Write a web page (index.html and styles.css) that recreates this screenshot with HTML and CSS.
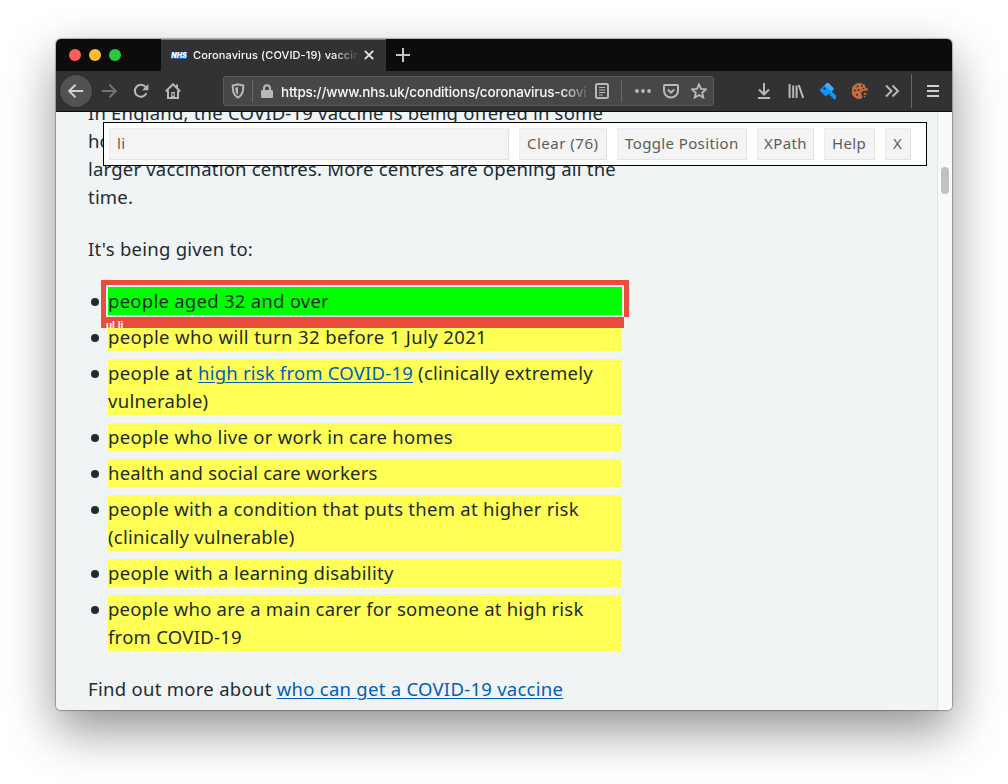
FILE: index.html
```html
<!DOCTYPE html>
<html lang="en">
<head>
<meta charset="utf-8">
<title>Coronavirus (COVID-19) vaccine</title>
<link rel="stylesheet" href="styles.css">
</head>
<body>
<div class="window">
  <header class="tabs">
    <div class="lights"><i class="red"></i><i class="amber"></i><i class="green"></i></div>
    <div class="tab">
      <span class="favicon">NHS</span>
      <span class="tab-title">Coronavirus (COVID-19) vaccin</span>
      <svg class="close" viewBox="0 0 10 10"><path d="M.8.8l8.400 8.400M9.200.8L.8 9.200"/></svg>
    </div>
    <svg class="plus" viewBox="0 0 14 14"><path d="M7 0v14M0 7h14"/></svg>
  </header>
  <nav class="toolbar">
    <span class="back"><svg viewBox="0 0 16 16"><path d="M15.200 8H1.500M7.500 1.700L1.200 8l6.300 6.300"/></svg></span>
    <svg class="ico forward" viewBox="0 0 16 16"><path d="M.8 8h13.700M8.500 1.700L14.800 8l-6.300 6.300"/></svg>
    <svg class="ico reload" viewBox="0 0 16 16"><path d="M13.400 10.200A6 6 0 1 1 12.600 4"/><path class="fill" d="M15.400 1v6.200H9.200z"/></svg>
    <svg class="ico home" viewBox="0 0 16 16"><path d="M.8 8.400L8 1.200l7.200 7.200M3 7.500V15h10V7.500"/><path class="fill" d="M6.200 9h3.600v6H6.200z"/><path class="fill" d="M11 1.500h2v4l-2-2z"/><path class="dark" d="M8 10.500v2"/></svg>
    <div class="urlbar">
      <svg class="ico shield" viewBox="0 0 14 16"><path d="M7 1.300c2 .8 3.600 1 5.300 1.100 0 5.600-.6 9.600-5.300 12.200C2.300 12 1.700 8 1.700 2.400 3.400 2.300 5 2.100 7 1.300z"/><path class="fill" d="M7 4v8C4.900 10.200 4.300 8.200 4.200 4.700z"/></svg>
      <i class="sep s1"></i>
      <svg class="lock" viewBox="0 0 12 14"><path d="M3 7V4.300a3 3 0 0 1 6 0V7"/><rect x="0" y="6" width="12" height="8" rx="1.200"/></svg>
      <span class="url">https://www.nhs.uk/conditions/coronavirus-covi</span>
      <svg class="reader" viewBox="0 0 14 16"><rect x="1" y="1" width="12" height="14" rx="1.500"/><path d="M4 4.500h6M4 7h6M4 9.500h6M4 12h3.500"/></svg>
      <i class="sep s2"></i>
      <svg class="dots" viewBox="0 0 16 4"><circle cx="2" cy="2" r="1.900"/><circle cx="8" cy="2" r="1.900"/><circle cx="14" cy="2" r="1.900"/></svg>
      <svg class="ico pocket" viewBox="0 0 16 16"><path d="M2 2h12a1 1 0 0 1 1 1v4.500a7 7 0 0 1-14 0V3a1 1 0 0 1 1-1z"/><path d="M4.800 6.500L8 9.600l3.200-3.100"/></svg>
      <svg class="ico star" viewBox="0 0 16 16"><path d="M8 1.300l2 4.600 5 .5-3.800 3.300 1.100 4.900L8 12l-4.300 2.600 1.100-4.900L1 6.400l5-.5z"/></svg>
    </div>
    <div class="actions">
      <svg class="ico" viewBox="0 0 16 16"><path d="M8 0v11M3 6.500l5 5 5-5M2 15h12"/></svg>
      <svg class="ico" viewBox="0 0 16 16"><path d="M1.600 1v14M5.200 2.500V15M8.600 2.500V15M10.800 2l4.400 13"/></svg>
      <svg class="ico color" viewBox="0 0 16 16"><path fill="#0a98fa" d="M0 6.800L6.800 0h1.700l4.900 4.900v1.700l-1.700 1.800 4.300 4.300V16h-3v-1.500h-1.600V13H9.800v-1.700L8.700 10.500l-2.200 2.200H5L0 8z"/><path fill="#42acf6" d="M4.500 2.300L6.800 0h1.700l4.900 4.900v1.700l-1.700 1.800z"/><path fill="#323234" d="M3 5.800L4.700 4.200l1.500 1.400-1.700 1.700z"/></svg>
      <svg class="ico color" viewBox="0 0 16 16"><path fill="#c06d3f" d="M9 .2a8 8 0 1 0 .5 15.600L10.500 13l-1.500-2 .8-2.500 2.700-.7L16 7.500 15.500 5l-2-.3L13 2z"/><g fill="#4a2418"><circle cx="5.500" cy="3.500" r=".9"/><circle cx="10" cy="3" r=".9"/><circle cx="2.800" cy="7.500" r=".9"/><circle cx="6.500" cy="7" r="1"/><circle cx="5" cy="11.800" r="1"/><circle cx="11.500" cy="5.500" r=".8"/></g><g fill="#c47b4c"><circle cx="12.500" cy="10.800" r="1"/><circle cx="14.300" cy="11.300" r=".8"/><circle cx="12.500" cy="13.600" r=".8"/></g></svg>
      <svg class="ico" viewBox="0 0 16 16"><path d="M2 2.500L7.500 8 2 13.500M8.500 2.500L14 8l-5.500 5.500"/></svg>
    </div>
    <i class="sep s3"></i>
    <svg class="burger" viewBox="0 0 12 12"><path d="M0 1h12M0 6h12M0 11h12"/></svg>
  </nav>
  <main class="page">
    <article>
      <p><span class="ln a1">In England, the COVID-19 vaccine is being offered in some</span><br><span class="ln">ho</span><br><span class="ln a1">larger vaccination centres. More centres are opening all the</span><br><span class="ln a1">time.</span></p>
      <p><span class="ln b1">It's being given to:</span></p>
      <ul>
        <li class="picked"><span class="ln b1">people aged 32 and over</span><span class="outline"></span><span class="path">ul li</span></li>
        <li><span class="ln b2">people who will turn 32 before 1 July 2021</span></li>
        <li><span class="ln b2">people at </span><a class="ln a1">high risk from COVID-19</a><span class="ln b1"> (clinically extremely</span><br><span class="ln b3">vulnerable)</span></li>
        <li><span class="ln b3">people who live or work in care homes</span></li>
        <li><span class="ln a1">health and social care workers</span></li>
        <li><span class="ln b1">people with a condition that puts them at higher risk</span><br><span class="ln b1">(clinically vulnerable)</span></li>
        <li><span class="ln b3">people with a learning disability</span></li>
        <li><span class="ln a1">people who are a main carer for someone at high risk</span><br><span class="ln b1">from COVID-19</span></li>
      </ul>
      <p><span class="ln b3">Find out more about </span><a class="ln b1">who can get a COVID-19 vaccine</a></p>
    </article>
    <div class="scrollbar"><i></i></div>
    <form class="selector">
      <span class="field">li</span>
      <span class="btn w1">Clear (76)</span>
      <span class="btn w2">Toggle Position</span>
      <span class="btn w3">XPath</span>
      <span class="btn w4">Help</span>
      <span class="btn w5">X</span>
    </form>
  </main>
</div>
</body>
</html>
```
FILE: styles.css
```css
* { box-sizing: border-box; }
body { margin: 0; width: 1008px; height: 784px; overflow: hidden; background: #fff; font-family: Inter, sans-serif; }
svg { display: block; flex: none; fill: none; stroke: #b9b9bb; stroke-width: 2; }
i { display: block; flex: none; }

.window { width: 896px; height: 671px; margin: 39px 0 0 56px; border-radius: 5px; box-shadow: 0 0 1px 1px rgba(0,0,0,.28), 0 20px 50px rgba(0,0,0,.44); }

.tabs { display: flex; height: 32px; background: #0c0c0d; border-radius: 5px 5px 0 0; align-items: center; }
.lights { display: flex; gap: 8px; width: 105px; padding-left: 13px; }
.lights i { width: 12px; height: 12px; border-radius: 50%; }
.red { background: #ff5f57; }
.amber { background: #febc2e; }
.green { background: #28c840; }
.tab { display: flex; align-items: center; width: 225px; height: 32px; padding-left: 10px; background: #323234; box-shadow: inset 0 1px #2f8bf0; }
.favicon { width: 16px; height: 7px; background: #1763b8; color: #fff; font: italic 900 7px/7px Inter, sans-serif; text-align: center; }
.tab-title { width: 168px; margin-left: 6px; overflow: hidden; white-space: nowrap; color: #f9f9fa; font-size: 11px; line-height: 14px; font-weight: 500; letter-spacing: .1px; mask-image: linear-gradient(90deg, #000 84%, transparent 99%); }
.close { width: 10px; height: 10px; margin-left: 3px; stroke: #e8e8e8; stroke-width: 1.8; }
.plus { width: 14px; height: 14px; margin: -1px 0 0 10px; stroke: #c4c4c4; }

.toolbar { display: flex; align-items: center; height: 41px; padding-left: 4px; background: #323234; border-bottom: 1px solid #0c0c0d; }
.back { display: grid; place-items: center; width: 32px; height: 32px; border-radius: 50%; background: #525254; box-shadow: 0 0 0 1px #2a2a2b; }
.back svg { width: 16px; height: 16px; stroke: #d0d0d1; }
.ico { width: 16px; height: 16px; }
.forward { margin-left: 9px; stroke: #737375; }
.reload { margin-left: 16px; }
.home { margin-left: 16px; }
.fill { fill: #b9b9bb; stroke: none; }
.dark { stroke: #323234; stroke-width: 1.5; }
.urlbar { display: flex; align-items: center; width: 491px; height: 30px; margin-left: 42px; padding-left: 7px; background: #474749; border: 1px solid #5c5c5e; border-radius: 3px; }
.shield { width: 14px; }
.sep { width: 1px; background: #68686b; }
.s1 { height: 22px; margin-left: 7px; }
.s2 { height: 22px; margin-left: 12px; }
.s3 { height: 34px; margin-left: 11px; }
.lock { width: 12px; height: 14px; margin-left: 8px; }
.lock rect { fill: #b9b9bb; stroke: none; }
.url { width: 307px; margin-left: 8px; padding-top: 2px; overflow: hidden; white-space: nowrap; color: #f9f9fa; font-size: 13.5px; font-weight: 500; letter-spacing: -.17px; mask-image: linear-gradient(90deg, #000 91%, transparent 101%); }
.reader { width: 14px; height: 16px; margin-left: 7px; }
.reader path { stroke-width: 1.2; }
.dots { width: 16px; height: 4px; margin-left: 13px; fill: #b9b9bb; stroke: none; }
.pocket { margin-left: 12px; }
.star { margin-left: 12px; stroke-width: 1.8; }
.actions { display: flex; gap: 16px; margin-left: 42px; }
.color { stroke: none; }
.burger { width: 12px; height: 12px; margin-left: 15px; stroke: #d0d0d1; }

.page { position: relative; height: 598px; overflow: hidden; background: #f0f4f5; border-radius: 0 0 5px 5px; }
article { width: 534px; margin: -13px 0 0 32px; color: #212b32; font: 18.5px/28px "Noto Sans", sans-serif; white-space: nowrap; }
p { margin: 0 0 24px; }
ul { list-style: none; margin: 0 0 24px 20px; padding: 0; }
li { position: relative; margin-bottom: 8px; background: #ffff55; }
li::before { content: ""; position: absolute; left: -17px; top: 11px; width: 8px; height: 8px; border-radius: 50%; background: #212b32; }
a { color: #005eb8; text-decoration: underline; text-decoration-thickness: 1px; text-underline-offset: 2px; }
.ln { white-space: pre; }
.a1 { letter-spacing: .2px; }
.b1 { letter-spacing: .26px; }
.b2 { letter-spacing: .38px; }
.b3 { letter-spacing: .29px; }
.picked { background: #0f0; }
.outline { position: absolute; left: -7px; top: -7px; width: 528px; height: 37px; border: 5px solid #e94e3d; border-bottom: 0; }
.path { position: absolute; z-index: 1; left: -7px; top: 30px; width: 523px; height: 11px; padding: 3px 0 0 5px; overflow: hidden; background: #e94e3d; color: #fff; font: bold 10px/12px "Liberation Sans", sans-serif; }

.scrollbar { position: absolute; right: 0; top: 0; width: 15px; height: 100%; background: #fafafa; border-left: 1px solid #e4e4e4; }
.scrollbar i { width: 8px; height: 27px; margin: 55px 0 0 3px; border-radius: 4px; background: #c1c1c1; }

.selector { position: absolute; left: 47px; top: 10px; display: flex; gap: 10px; width: 824px; height: 44px; padding: 5px; background: #fff; border: 1px solid #000; color: #5c5c5c; font: 15px/28px "Noto Sans", sans-serif; letter-spacing: .38px; }
.field, .btn { height: 32px; background: #f4f4f4; border: 1px solid #e2e2e2; border-top-color: #ececec; border-left-color: #ececec; white-space: nowrap; }
.field { width: 400px; padding-left: 7px; }
.btn { padding-left: 7px; }
.w1 { width: 88px; letter-spacing: .5px; }
.w2 { width: 130px; }
.w3 { width: 57px; padding-left: 6px; }
.w4 { width: 51px; }
.w5 { width: 26px; }
```
